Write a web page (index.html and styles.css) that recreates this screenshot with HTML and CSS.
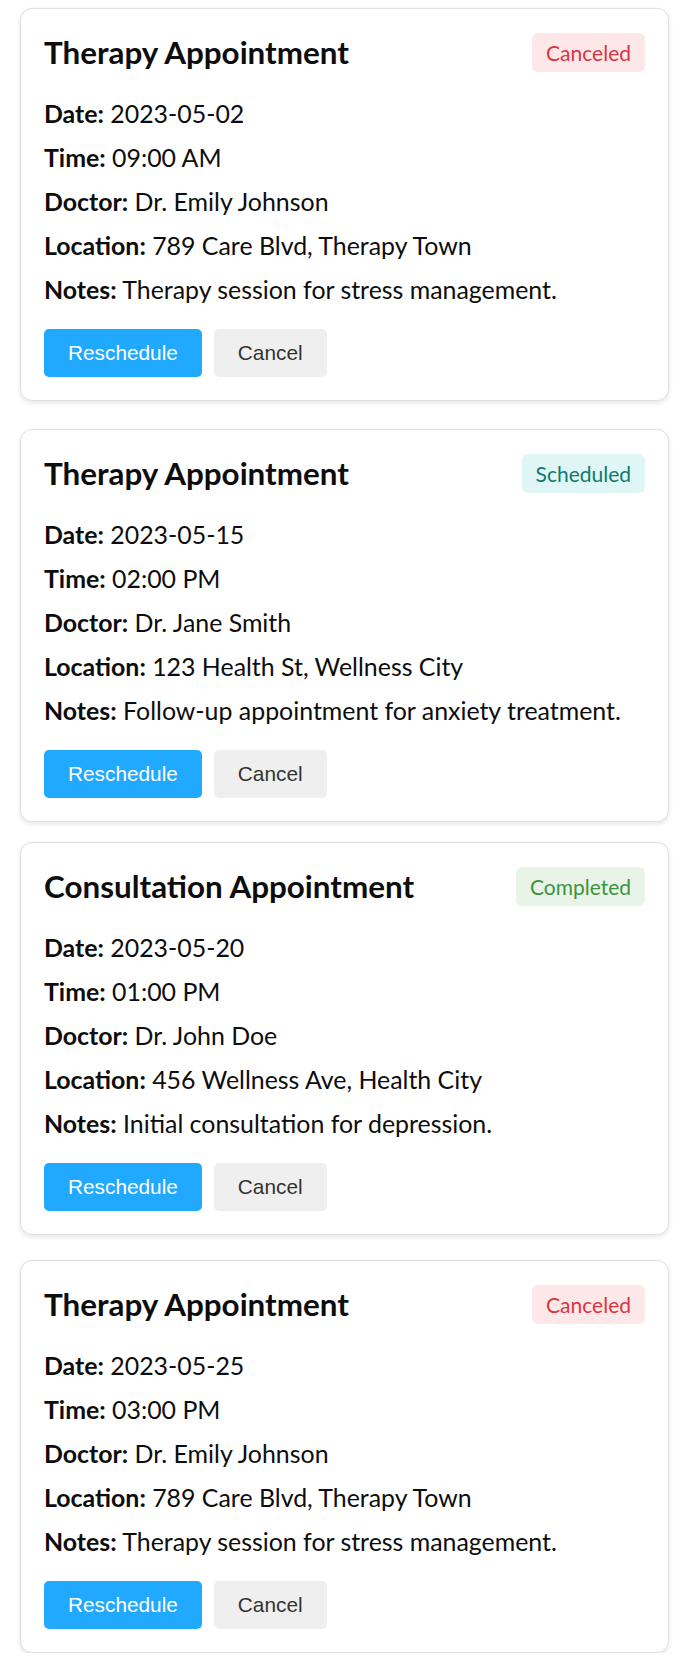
FILE: index.html
```html
<!DOCTYPE html>
<html lang="en">
<head>
<meta charset="utf-8">
<title>Appointments</title>
<link rel="stylesheet" href="styles.css">
</head>
<body>
<main class="list">
  <article class="card">
    <header class="card-head">
      <h2 class="card-title">Therapy Appointment</h2>
      <span class="badge badge-canceled">Canceled</span>
    </header>
    <p class="row"><b>Date:</b> 2023-05-02</p>
    <p class="row"><b>Time:</b> 09:00 AM</p>
    <p class="row"><b>Doctor:</b> Dr. Emily Johnson</p>
    <p class="row"><b>Location:</b> 789 Care Blvd, Therapy Town</p>
    <p class="row"><b>Notes:</b> Therapy session for stress management.</p>
    <div class="actions">
      <button class="btn btn-primary">Reschedule</button>
      <button class="btn btn-secondary">Cancel</button>
    </div>
  </article>

  <article class="card">
    <header class="card-head">
      <h2 class="card-title">Therapy Appointment</h2>
      <span class="badge badge-scheduled">Scheduled</span>
    </header>
    <p class="row"><b>Date:</b> 2023-05-15</p>
    <p class="row"><b>Time:</b> 02:00 PM</p>
    <p class="row"><b>Doctor:</b> Dr. Jane Smith</p>
    <p class="row"><b>Location:</b> 123 Health St, Wellness City</p>
    <p class="row"><b>Notes:</b> Follow-up appointment for anxiety treatment.</p>
    <div class="actions">
      <button class="btn btn-primary">Reschedule</button>
      <button class="btn btn-secondary">Cancel</button>
    </div>
  </article>

  <article class="card">
    <header class="card-head">
      <h2 class="card-title">Consultation Appointment</h2>
      <span class="badge badge-completed">Completed</span>
    </header>
    <p class="row"><b>Date:</b> 2023-05-20</p>
    <p class="row"><b>Time:</b> 01:00 PM</p>
    <p class="row"><b>Doctor:</b> Dr. John Doe</p>
    <p class="row"><b>Location:</b> 456 Wellness Ave, Health City</p>
    <p class="row"><b>Notes:</b> Initial consultation for depression.</p>
    <div class="actions">
      <button class="btn btn-primary">Reschedule</button>
      <button class="btn btn-secondary">Cancel</button>
    </div>
  </article>

  <article class="card">
    <header class="card-head">
      <h2 class="card-title">Therapy Appointment</h2>
      <span class="badge badge-canceled">Canceled</span>
    </header>
    <p class="row"><b>Date:</b> 2023-05-25</p>
    <p class="row"><b>Time:</b> 03:00 PM</p>
    <p class="row"><b>Doctor:</b> Dr. Emily Johnson</p>
    <p class="row"><b>Location:</b> 789 Care Blvd, Therapy Town</p>
    <p class="row"><b>Notes:</b> Therapy session for stress management.</p>
    <div class="actions">
      <button class="btn btn-primary">Reschedule</button>
      <button class="btn btn-secondary">Cancel</button>
    </div>
  </article>
</main>
</body>
</html>
```

FILE: styles.css
```css
* {
  box-sizing: border-box;
}

html, body {
  margin: 0;
  padding: 0;
  background: #ffffff;
}

body {
  font-family: Lato, "Noto Sans", sans-serif;
  color: #0d0d0d;
}

.list {
  display: flex;
  flex-direction: column;
  padding: 8px 0 0 20px;
  width: 669px;
}

.card {
  border: 1px solid #e0e0e0;
  border-radius: 12px;
  background: #ffffff;
  box-shadow: 0 2px 5px rgba(0, 0, 0, 0.1);
  padding: 23px;
}

.card:nth-child(2) {
  margin-top: 28px;
}

.card:nth-child(3) {
  margin-top: 20px;
}

.card:nth-child(4) {
  margin-top: 25px;
}

.card-head {
  display: flex;
  align-items: center;
  justify-content: space-between;
  height: 41px;
  margin-bottom: 24px;
}

.card-title {
  margin: 0;
  font-size: 31.4px;
  font-weight: 700;
  line-height: 41px;
  color: #0d0d0d;
}

.badge {
  height: 39px;
  line-height: 39px;
  padding: 0 14px;
  border-radius: 6px;
  font-size: 21px;
}

.badge-canceled {
  background: #fde7e9;
  color: #dc3540;
}

.badge-scheduled {
  background: #e0f6f6;
  color: #10796e;
}

.badge-completed {
  background: #e7f4e7;
  color: #3f933f;
}

.row {
  margin: 0 0 12px 0;
  font-size: 24.9px;
  line-height: 32px;
}

.row:last-of-type {
  margin-bottom: 0;
}

.row b {
  font-weight: 700;
}

.actions {
  display: flex;
  gap: 12px;
  margin-top: 24px;
}

.btn {
  height: 48px;
  padding: 0 24px;
  border: none;
  border-radius: 5px;
  font-family: "Liberation Sans", Arial, sans-serif;
  font-size: 20.8px;
  cursor: pointer;
}

.btn-primary {
  background: #21a8ff;
  color: #ffffff;
}

.btn-secondary {
  background: #efefef;
  color: #333333;
}
```
